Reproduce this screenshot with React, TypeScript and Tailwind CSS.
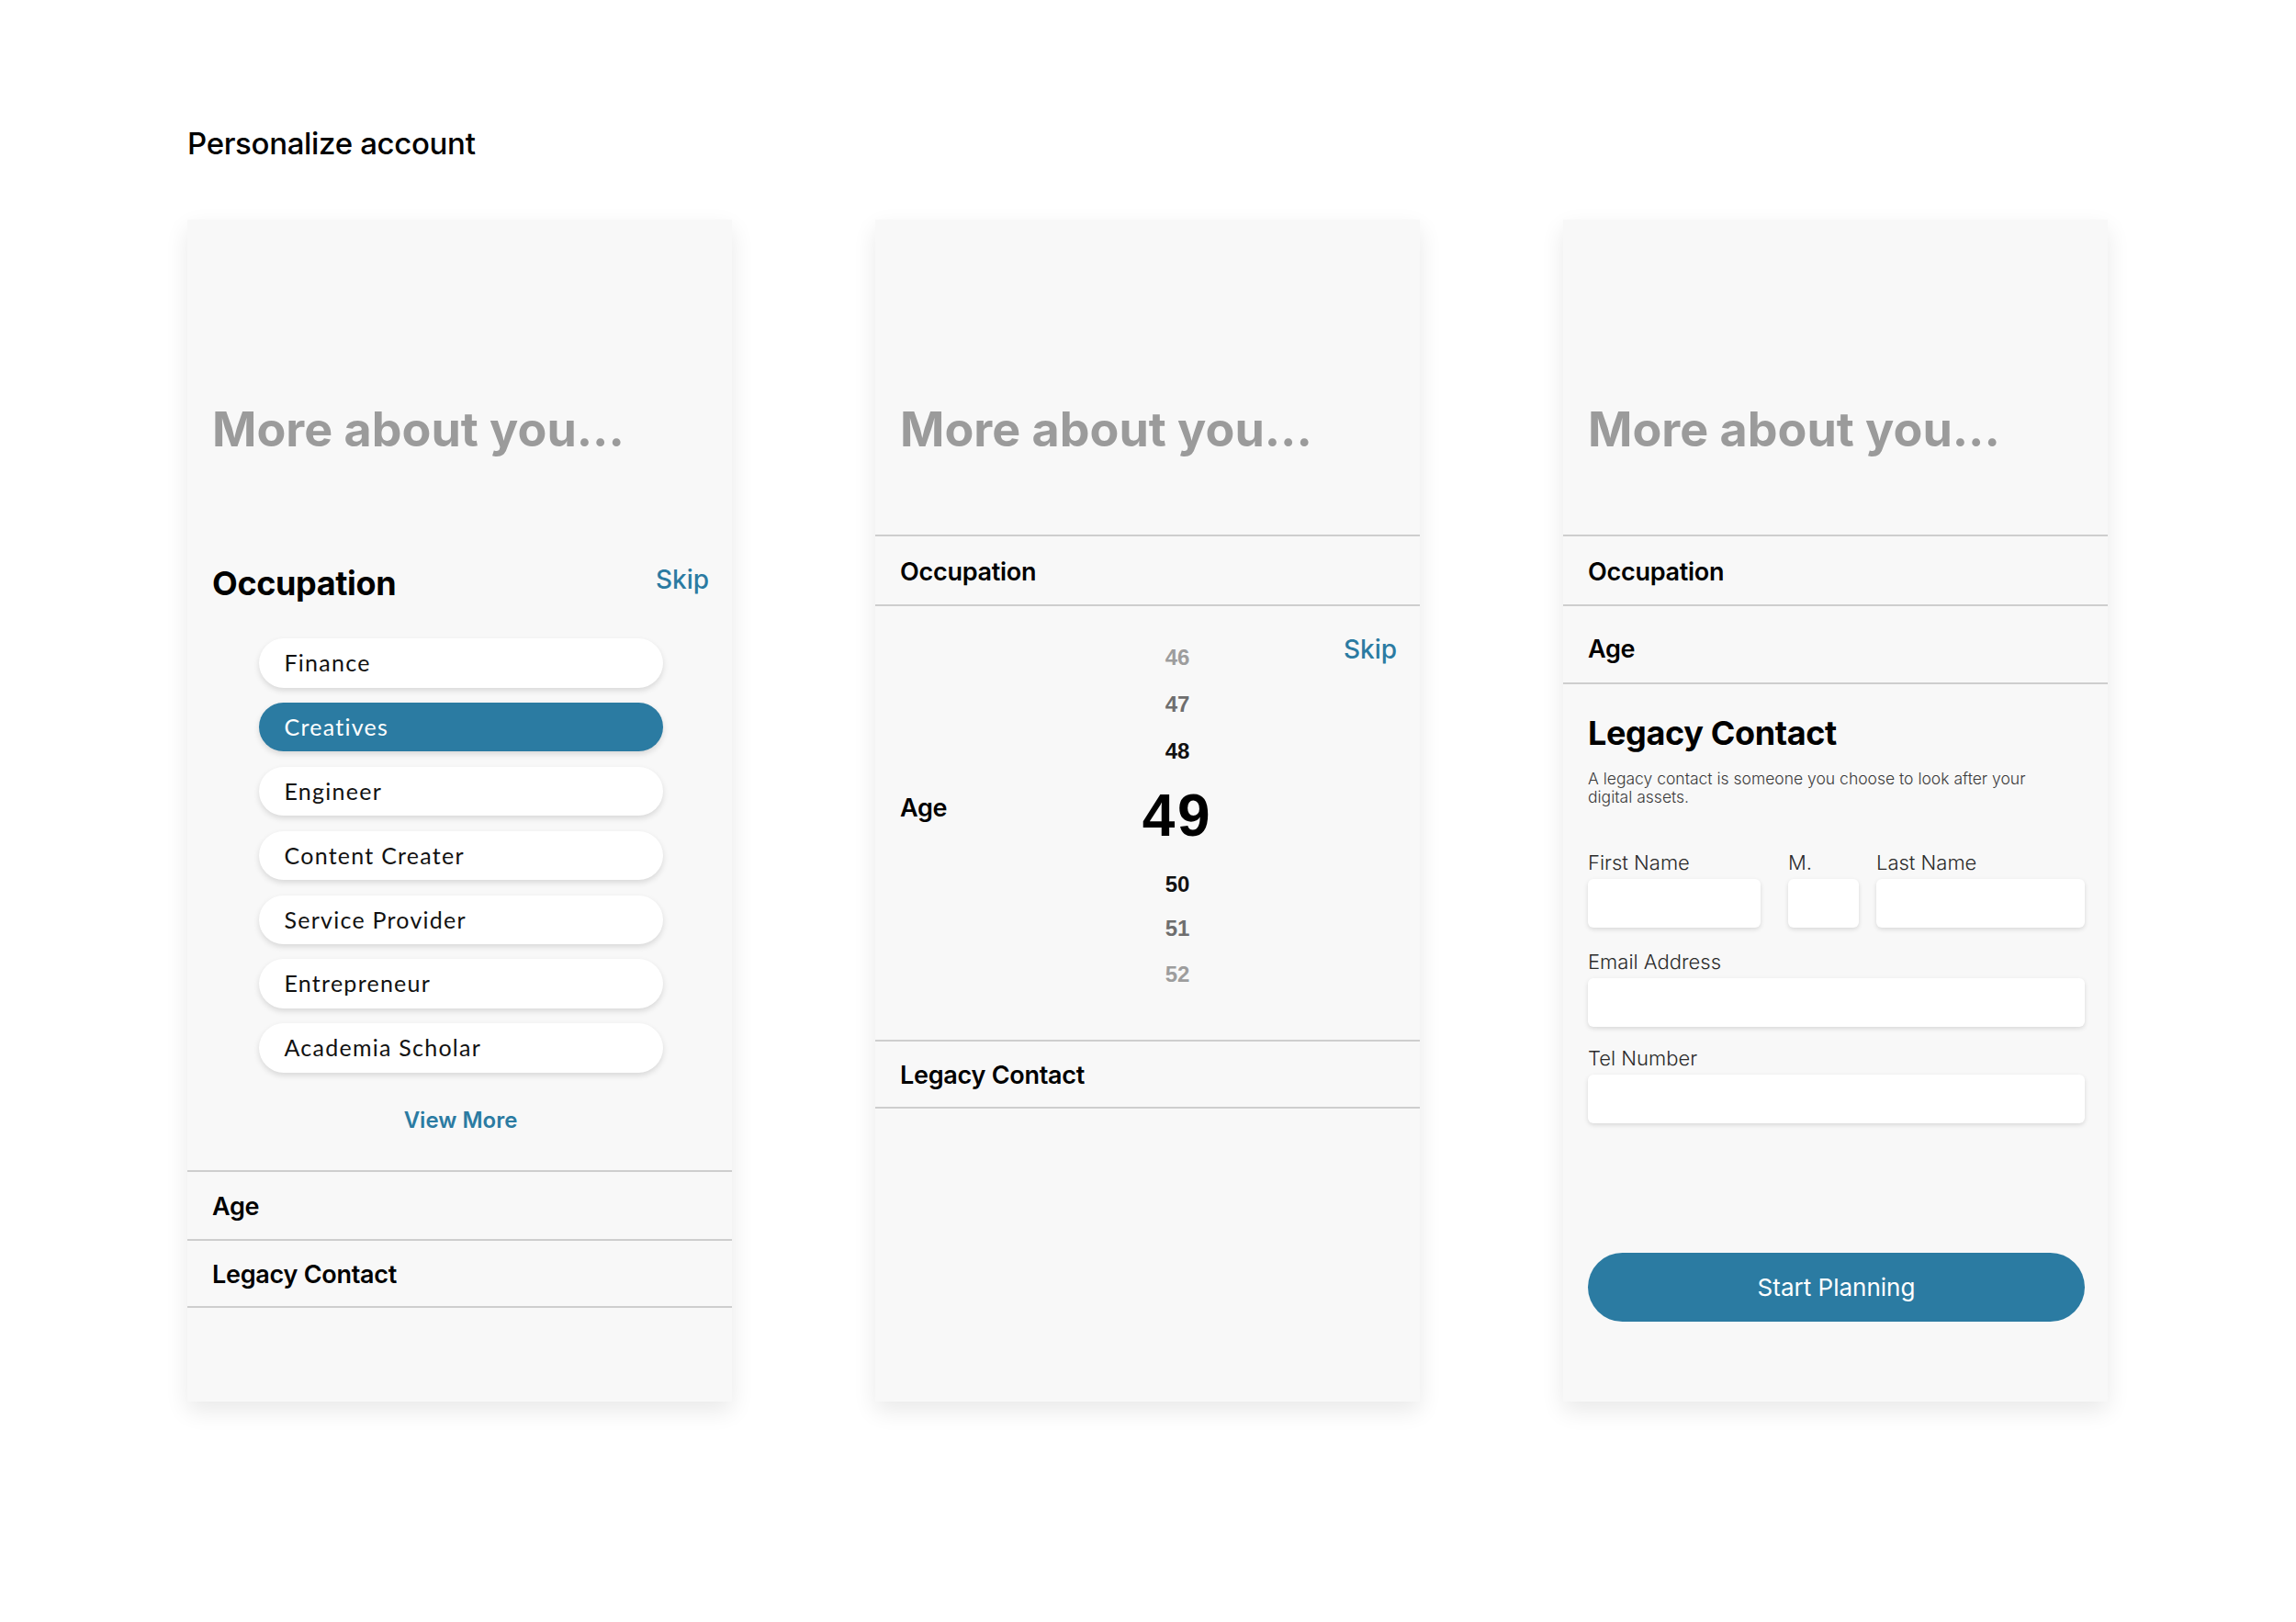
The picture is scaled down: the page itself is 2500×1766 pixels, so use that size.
import React from 'react';

const occupations = [
  'Finance',
  'Creatives',
  'Engineer',
  'Content Creater',
  'Service Provider',
  'Entrepreneur',
  'Academia Scholar',
];

const SELECTED = 'Creatives';

// picker wheel rows, the selected age sits in the middle
const ages = [
  { n: 46, cls: 'h-[30px] text-[24px] text-[#9d9d9d]' },
  { n: 47, cls: 'mt-[21px] h-[30px] text-[24px] text-[#6e6e6e]' },
  { n: 48, cls: 'mt-[21px] h-[30px] text-[24px] text-[#111111]' },
  { n: 49, cls: 'mt-[20px] h-[70px] text-[64px] tracking-[0.04em] text-black' },
  { n: 50, cls: 'mt-[25px] h-[30px] text-[24px] text-[#111111]' },
  { n: 51, cls: 'mt-[18px] h-[30px] text-[24px] text-[#6e6e6e]' },
  { n: 52, cls: 'mt-[20px] h-[30px] text-[24px] text-[#9d9d9d]' },
];

const sans = "font-['Inter',sans-serif]";

function Card({ children }: { children: React.ReactNode }) {
  return (
    <div className="flex h-[1287px] w-[593px] shrink-0 flex-col overflow-hidden bg-[#f8f8f8] shadow-[0_10px_24px_rgba(0,0,0,0.09)]">
      {children}
    </div>
  );
}

function CardHeader() {
  return (
    <div className="h-[343px] shrink-0 pl-[27px] pr-[25px] pt-[198px]">
      <h2 className="text-[52px] font-bold leading-[62px] text-[#9b9b9b]">More about you...</h2>
    </div>
  );
}

function SectionRow({ label, height, bottom }: { label: string; height: string; bottom?: boolean }) {
  return (
    <div
      className={`flex shrink-0 items-center border-t-2 border-[#cecece] pl-[27px] pr-[25px] pt-[4px] ${height} ${
        bottom ? 'border-b-2' : ''
      }`}
    >
      <span className="text-[27px] font-semibold tracking-[-0.01em] text-black">{label}</span>
    </div>
  );
}

function OccupationCard() {
  return (
    <Card>
      <CardHeader />
      <div className="flex h-[692px] shrink-0 flex-col pl-[27px] pr-[25px] pt-[31px]">
        <div className="flex items-center justify-between">
          <h3 className="text-[36px] font-bold leading-[44px] tracking-[-0.01em] text-black">Occupation</h3>
          <button className="-mt-[9px] text-[28px] font-medium text-[#2b7ba2]">Skip</button>
        </div>
        <ul className="mx-auto mt-[38px] flex w-[440px] flex-col gap-[16.4px]">
          {occupations.map((o) => (
            <li
              key={o}
              className={`flex h-[53.5px] items-center rounded-full pl-[28px] font-['Lato',sans-serif] text-[25px] tracking-[0.05em] shadow-[0_3px_6px_rgba(0,0,0,0.13)] ${
                o === SELECTED ? 'bg-[#2b7ba2] text-white' : 'bg-white text-[#111111]'
              }`}
            >
              {o}
            </li>
          ))}
        </ul>
        <button className="mt-[37px] text-center text-[24px] font-semibold leading-[30px] text-[#2b7ba2]">
          View More
        </button>
      </div>
      <SectionRow label="Age" height="h-[75px]" />
      <SectionRow label="Legacy Contact" height="h-[75px]" bottom />
    </Card>
  );
}

function AgeCard() {
  return (
    <Card>
      <CardHeader />
      <SectionRow label="Occupation" height="h-[76px]" />
      <div className="flex h-[474px] shrink-0 border-t-2 border-[#cecece] pl-[27px] pr-[25px] pt-[41px]">
        <div className="flex w-[250px] items-center pb-[72px]">
          <span className="text-[27px] font-semibold tracking-[-0.01em] text-black">Age</span>
        </div>
        <div className="flex w-[104px] flex-col font-['Liberation_Sans',sans-serif] font-bold">
          {ages.map((a) => (
            <div key={a.n} className={`flex items-center justify-center ${a.cls}`}>
              {a.n}
            </div>
          ))}
        </div>
        <div className="-mt-[11px] flex flex-1 justify-end">
          <button className="h-[34px] text-[28px] font-medium leading-[34px] text-[#2b7ba2]">Skip</button>
        </div>
      </div>
      <SectionRow label="Legacy Contact" height="h-[75px]" bottom />
    </Card>
  );
}

function Field({ label, className }: { label: string; className?: string }) {
  return (
    <label className={`flex flex-col ${className ?? ''}`}>
      <span className="text-[22px] font-light leading-[26px] text-[#2a2a2a]">{label}</span>
      <input className="mt-[5px] h-[53px] w-full rounded-[6px] bg-white shadow-[0_2px_5px_rgba(0,0,0,0.13)] outline-none" />
    </label>
  );
}

function LegacyCard() {
  return (
    <Card>
      <CardHeader />
      <SectionRow label="Occupation" height="h-[76px]" />
      <div className="flex h-[85px] shrink-0 items-center border-t-2 border-[#cecece] pl-[27px] pr-[25px] pt-[12px]">
        <span className="text-[27px] font-semibold tracking-[-0.01em] text-black">Age</span>
      </div>
      <div className="flex flex-1 flex-col border-t-2 border-[#cecece] pl-[27px] pr-[25px] pt-[31px]">
        <h3 className="text-[36px] font-bold leading-[44px] tracking-[-0.01em] text-black">Legacy Contact</h3>
        <p className="mt-[18px] max-w-[500px] text-[17.5px] font-light leading-[20px] text-[#3a3a3a]">
          A legacy contact is someone you choose to look after your digital assets.
        </p>
        <div className="mt-[48px] flex">
          <Field label="First Name" className="w-[188px]" />
          <Field label="M." className="ml-[30px] w-[77px]" />
          <Field label="Last Name" className="ml-[19px] flex-1" />
        </div>
        <Field label="Email Address" className="mt-[24px]" />
        <Field label="Tel Number" className="mt-[21px]" />
        <button className="mt-[141px] h-[75px] w-full rounded-full bg-[#2b7ba2] text-[26px] text-white">
          Start Planning
        </button>
      </div>
    </Card>
  );
}

export default function App() {
  return (
    <main className={`min-h-[1766px] bg-white pl-[204px] pt-[136px] text-black ${sans}`}>
      <h1 className="text-[33px] font-medium leading-[40px] tracking-[-0.01em]">Personalize account</h1>
      <div className="mt-[63px] flex gap-[156px]">
        <OccupationCard />
        <AgeCard />
        <LegacyCard />
      </div>
    </main>
  );
}
